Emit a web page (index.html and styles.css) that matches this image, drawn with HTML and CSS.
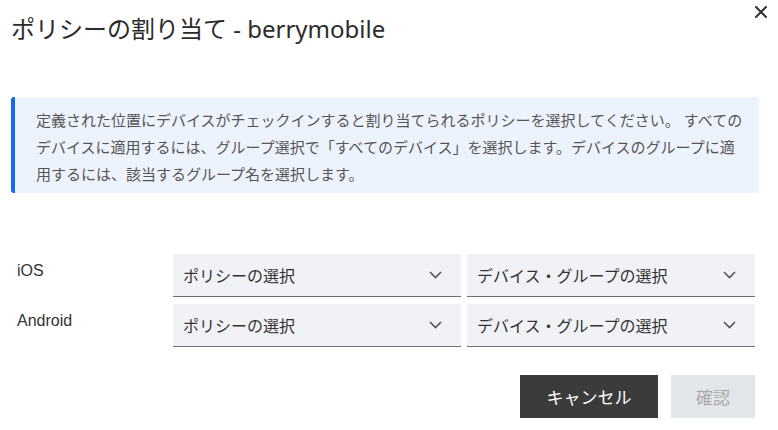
FILE: index.html
```html
<!DOCTYPE html>
<html lang="ja">
<head>
<meta charset="utf-8">
<title>ポリシーの割り当て</title>
<link rel="stylesheet" href="styles.css">
</head>
<body>
<div class="dialog">
  <header class="header">
    <h1 class="title">ポリシーの割り当て - berrymobile</h1>
    <button class="close" aria-label="閉じる">
      <svg width="12" height="12" viewBox="0 0 12 12"><path d="M1 1L11 11M11 1L1 11" stroke="#333" stroke-width="2" fill="none" stroke-linecap="square"/></svg>
    </button>
  </header>
  <div class="info">
    <p>定義された位置にデバイスがチェックインすると割り当てられるポリシーを選択してください。 すべてのデバイスに適用するには、グループ選択で「すべてのデバイス」を選択します。デバイスのグループに適用するには、該当するグループ名を選択します。</p>
  </div>
  <div class="rows">
    <div class="label">iOS</div>
    <div class="select"><span>ポリシーの選択</span><svg class="chev" width="13" height="8" viewBox="0 0 13 8"><path d="M1 1L6.5 6.5L12 1" stroke="#555" stroke-width="1.6" fill="none"/></svg></div>
    <div class="select"><span>デバイス・グループの選択</span><svg class="chev" width="13" height="8" viewBox="0 0 13 8"><path d="M1 1L6.5 6.5L12 1" stroke="#555" stroke-width="1.6" fill="none"/></svg></div>
    <div class="label">Android</div>
    <div class="select"><span>ポリシーの選択</span><svg class="chev" width="13" height="8" viewBox="0 0 13 8"><path d="M1 1L6.5 6.5L12 1" stroke="#555" stroke-width="1.6" fill="none"/></svg></div>
    <div class="select"><span>デバイス・グループの選択</span><svg class="chev" width="13" height="8" viewBox="0 0 13 8"><path d="M1 1L6.5 6.5L12 1" stroke="#555" stroke-width="1.6" fill="none"/></svg></div>
  </div>
  <div class="actions">
    <button class="btn btn-cancel">キャンセル</button>
    <button class="btn btn-ok">確認</button>
  </div>
</div>
</body>
</html>
```

FILE: styles.css
```css
html, body {
  margin: 0;
  padding: 0;
  background: #ffffff;
}
body {
  font-family: "Liberation Sans", "Noto Sans CJK JP", Arial, sans-serif;
  color: #333333;
}
.dialog {
  width: 778px;
  height: 430px;
  box-sizing: border-box;
}
.header {
  display: flex;
  justify-content: space-between;
  align-items: flex-start;
  padding: 0 11px 0 11px;
}
.title {
  margin: 13px 0 0 0;
  font-family: "Noto Sans", "Noto Sans CJK JP", sans-serif;
  font-size: 24px;
  line-height: 32px;
  font-weight: normal;
  color: #2b2b2b;
}
.close {
  margin-top: 6px;
  padding: 0;
  border: none;
  background: none;
  width: 12px;
  height: 12px;
  display: flex;
}
.info {
  margin: 52px 19px 0 11px;
  background: #edf3fd;
  border-left: 4px solid #1668f5;
  border-radius: 3px;
  padding: 10px 16px 5px 21px;
}
.info p {
  margin: 0;
  font-size: 15px;
  line-height: 27px;
  color: #555555;
}
.rows {
  margin-top: 61px;
  padding: 0 23px 0 17px;
  display: grid;
  grid-template-columns: 150px 288px 288px;
  column-gap: 6px;
  row-gap: 7px;
}
.label {
  font-size: 16px;
  line-height: 18px;
  padding-top: 8px;
  color: #333333;
}
.select {
  height: 43px;
  box-sizing: border-box;
  background: #f1f2f6;
  border-bottom: 1px solid #707070;
  display: flex;
  align-items: center;
  justify-content: space-between;
  padding: 0 19px 0 10px;
  font-size: 16px;
  color: #333333;
}
.chev {
  display: block;
}
.actions {
  margin-top: 28px;
  padding-right: 23px;
  display: flex;
  justify-content: flex-end;
  gap: 13px;
}
.btn {
  height: 43px;
  border: none;
  font-family: "Liberation Sans", "Noto Sans CJK JP", sans-serif;
  font-size: 17px;
  padding: 0;
}
.btn-cancel {
  width: 138px;
  background: #3b3b3b;
  color: #ffffff;
}
.btn-ok {
  width: 84px;
  background: #e2e5ea;
  color: #a9a9a9;
}
```
